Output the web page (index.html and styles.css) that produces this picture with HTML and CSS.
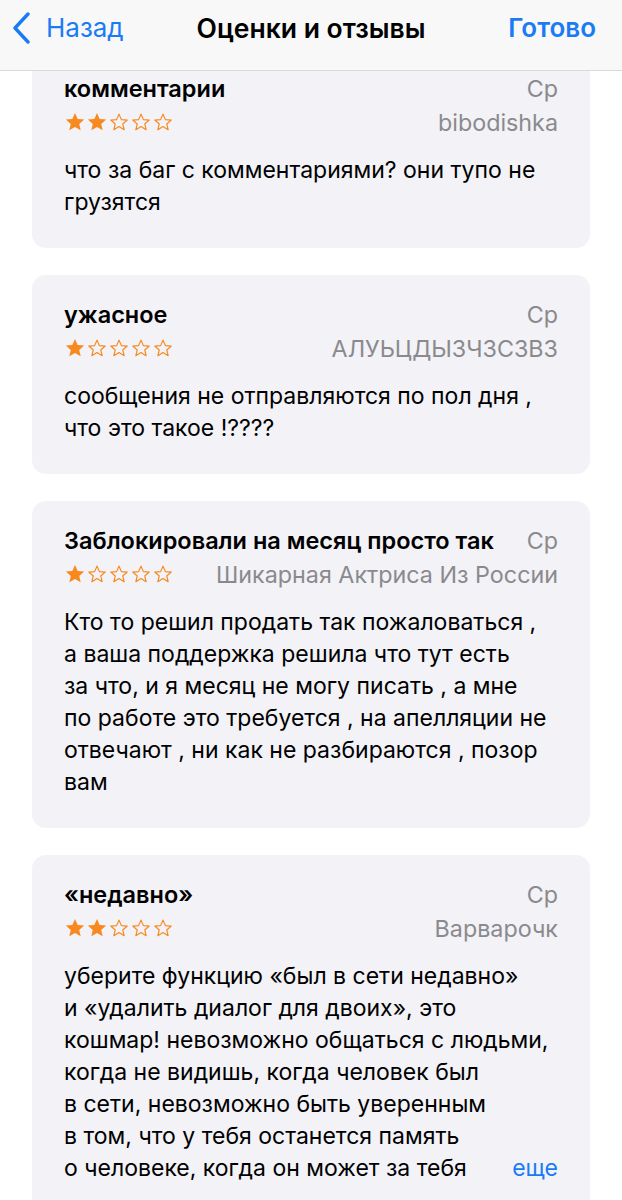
FILE: index.html
```html
<!DOCTYPE html>
<html lang="ru">
<head>
    <meta charset="UTF-8">
    <meta name="viewport" content="width=device-width, initial-scale=1.0">
    <title>Оценки и отзывы</title>
    <link rel="stylesheet" href="styles.css">
</head>
<body>
    <header class="nav-bar">
        <a class="nav-back" href="#">
            <svg class="chevron" width="20" height="32" viewBox="0 0 20 32">
                <path d="M16 2 L3 16 L16 30" fill="none" stroke="#1a7cf5" stroke-width="3.4" stroke-linecap="round" stroke-linejoin="round"/>
            </svg>
            Назад
        </a>
        <h1 class="nav-title">Оценки и отзывы</h1>
        <a class="nav-done" href="#">Готово</a>
    </header>

    <main class="reviews">
        <div class="review">
            <div class="review-head">
                <span class="review-title">комментарии</span>
                <span class="review-date">Ср</span>
            </div>
            <div class="review-meta">
                <span class="stars" data-rating="2"></span>
                <span class="review-author">bibodishka</span>
            </div>
            <p class="review-text">что за баг с комментариями? они тупо не<br>грузятся</p>
        </div>

        <div class="review">
            <div class="review-head">
                <span class="review-title">ужасное</span>
                <span class="review-date">Ср</span>
            </div>
            <div class="review-meta">
                <span class="stars" data-rating="1"></span>
                <span class="review-author">АЛУЬЦДЫЗЧЗСЗВЗ</span>
            </div>
            <p class="review-text">сообщения не отправляются по пол дня ,<br>что это такое !????</p>
        </div>

        <div class="review">
            <div class="review-head">
                <span class="review-title">Заблокировали на месяц просто так</span>
                <span class="review-date">Ср</span>
            </div>
            <div class="review-meta">
                <span class="stars" data-rating="1"></span>
                <span class="review-author">Шикарная Актриса Из России</span>
            </div>
            <p class="review-text">Кто то решил продать так пожаловаться ,<br>а ваша поддержка решила что тут есть<br>за что, и я месяц не могу писать , а мне<br>по работе это требуется , на апелляции не<br>отвечают , ни как не разбираются , позор<br>вам</p>
        </div>

        <div class="review">
            <div class="review-head">
                <span class="review-title">«недавно»</span>
                <span class="review-date">Ср</span>
            </div>
            <div class="review-meta">
                <span class="stars" data-rating="2"></span>
                <span class="review-author">Варварочк</span>
            </div>
            <div class="review-body">
                <p class="review-text">уберите функцию «был в сети недавно»<br>и «удалить диалог для двоих», это<br>кошмар! невозможно общаться с людьми,<br>когда не видишь, когда человек был<br>в сети, невозможно быть уверенным<br>в том, что у тебя останется память<br>о человеке, когда он может за тебя</p>
                <a class="more" href="#">еще</a>
            </div>
        </div>
    </main>

    <script>
        // рисуем звезды по рейтингу
        const full = '<svg width="22" height="22" viewBox="0 0 24 24"><path d="M12 2.2l2.9 6.6 7.1.6-5.4 4.7 1.6 7-6.2-3.7-6.2 3.7 1.6-7L2 9.4l7.1-.6z" fill="#f7891f"/></svg>';
        const empty = '<svg width="22" height="22" viewBox="0 0 24 24"><path d="M12 3.4l2.6 6 6.4.5-4.9 4.2 1.5 6.3-5.6-3.4-5.6 3.4 1.5-6.3L3 9.9l6.4-.5z" fill="none" stroke="#f7891f" stroke-width="1.3" stroke-linejoin="round"/></svg>';

        document.querySelectorAll('.stars').forEach(function (el) {
            const rating = parseInt(el.dataset.rating);
            let html = '';
            for (let i = 0; i < 5; i++) {
                html += i < rating ? full : empty;
            }
            el.innerHTML = html;
        });
    </script>
</body>
</html>
```

FILE: styles.css
```css
body {
    font-family: 'Inter', 'Noto Sans', sans-serif;
    background-color: #ffffff;
    margin: 0;
    padding: 0;
    color: #000;
}

a {
    text-decoration: none;
}

.nav-bar {
    position: fixed;
    top: 0;
    left: 0;
    right: 0;
    height: 71px;
    background-color: #f8f8f8;
    border-bottom: 1px solid #dadada;
    display: flex;
    align-items: flex-start;
    justify-content: space-between;
    padding: 10px 26px 0 12px;
    box-sizing: border-box;
    z-index: 10;
}

.nav-back {
    display: flex;
    align-items: center;
    gap: 14px;
    color: #1a7cf5;
    font-size: 26px;
    line-height: 36px;
}

.nav-title {
    margin: 0;
    font-size: 26.5px;
    font-weight: 600;
    line-height: 36px;
    position: absolute;
    left: 0;
    right: 0;
    top: 10px;
    text-align: center;
    pointer-events: none;
}

.nav-done {
    color: #1a7cf5;
    font-size: 26px;
    font-weight: 600;
    line-height: 36px;
}

.reviews {
    padding: 49px 32px 0;
    display: flex;
    flex-direction: column;
    gap: 27px;
}

.review {
    background-color: #f2f2f7;
    border-radius: 14px;
    padding: 24px 32px 30px;
}

.review-head,
.review-meta {
    display: flex;
    justify-content: space-between;
    align-items: center;
    height: 30px;
}

.review-meta {
    margin-top: 4px;
}

.review-title {
    font-size: 23.5px;
    font-weight: 600;
    white-space: nowrap;
}

.review-date,
.review-author {
    color: #8a8a8e;
    font-size: 23.3px;
    white-space: nowrap;
}

.stars {
    display: flex;
    height: 22px;
}

.review-body {
    position: relative;
}

.review-text {
    margin: 17px 0 0;
    font-size: 23px;
    line-height: 32px;
    white-space: nowrap;
}

.more {
    position: absolute;
    right: 0;
    bottom: 0;
    line-height: 32px;
    font-size: 23px;
    color: #1a7cf5;
}
```
